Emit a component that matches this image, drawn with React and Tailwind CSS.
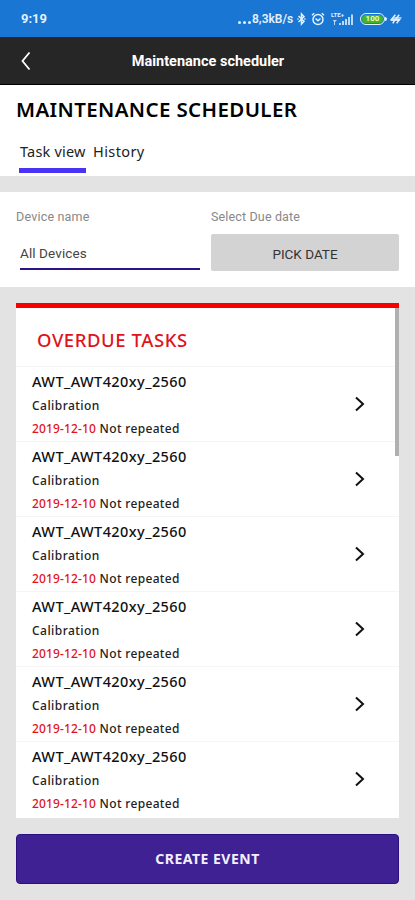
import React from "react";

const tasks = Array.from({ length: 6 }).map((_, i) => ({
  id: i,
  device: "AWT_AWT420xy_2560",
  type: "Calibration",
  due: "2019-12-10",
  repeat: "Not repeated",
}));

const StatusBar = () => (
  <div className="flex h-[37px] shrink-0 items-center bg-[#1976d2] pl-[21px] pr-[13px] pt-px font-[Roboto] text-[#e3f1ff]">
    <span className="text-[13px] font-bold">9:19</span>
    <div className="ml-auto flex items-center">
      <span className="mr-px flex gap-[2px] pt-[6px]">
        <i className="size-[3px] rounded-full bg-current" />
        <i className="size-[3px] rounded-full bg-current" />
        <i className="size-[3px] rounded-full bg-current" />
      </span>
      <span className="w-[44px] whitespace-nowrap text-[12px] font-semibold">8,3kB/s</span>
      {/* bluetooth */}
      <svg className="ml-px" width="9" height="14" viewBox="0 0 9 14" fill="none" stroke="currentColor" strokeWidth="1.5">
        <path d="M1.5 4 7 9.3 4.5 12V2L7 4.7 1.5 10" />
        <path d="M.3 7h1.2M7.2 7h1.3" />
      </svg>
      {/* alarm */}
      <svg className="ml-[5px]" width="14" height="14" viewBox="0 0 14 14" fill="none" stroke="currentColor" strokeWidth="1.5">
        <circle cx="7" cy="7.5" r="5" />
        <path d="M4.5 6.5 7 8.8l2.5-2.3M1 3.2 3.2 1.2M13 3.2 10.8 1.2" />
      </svg>
      {/* signal */}
      <span className="relative ml-[6px] h-[14px] w-[24px]">
        <span className="absolute left-0 top-0 text-[6px] font-bold leading-[6px]">LTE+</span>
        <svg className="absolute inset-0" width="24" height="14" viewBox="0 0 24 14" fill="currentColor">
          <path d="M2 8h4L4 10v3H3v-3zM8 11h2v2H8zM11 9h2v4h-2zM14 7h2v6h-2zM17 5h2v8h-2zM20 2.5h2V13h-2z" opacity=".8" />
        </svg>
      </span>
      {/* battery */}
      <span className="ml-[5px] flex h-[12px] w-[25px] items-center rounded-full border border-current p-px">
        <span className="flex h-full flex-1 items-center justify-center rounded-full bg-[#43b52c] text-[8px] font-bold leading-none text-[#e9ffc9]">
          100
        </span>
      </span>
      <i className="h-[4px] w-[2px] rounded-r bg-current" />
      {/* charging */}
      <svg className="ml-[3px]" width="12" height="12" viewBox="0 0 12 12" fill="none" stroke="currentColor" strokeWidth="1.5">
        <path d="M5.4 1.8 1.6 6.2h3.6L2.8 10.4M9.2 1.8 5.6 6.2h4.2L6.6 10.4" />
        <path d="M.5 7.4h9M3 4.8h8.5" strokeWidth="1" />
      </svg>
    </div>
  </div>
);

const NavBar = () => (
  <div className="relative flex h-[48px] shrink-0 items-center justify-center border-b border-black bg-[#262626] font-[Roboto] text-white">
    <svg className="absolute left-[20px] top-[14px]" width="12" height="20" viewBox="0 0 12 20" fill="none" stroke="currentColor" strokeWidth="1.8">
      <path d="M9.5 1.5 2.5 10l7 8.5" />
    </svg>
    <h1 className="pl-px pt-[3px] text-[14.5px] font-bold">Maintenance scheduler</h1>
  </div>
);

const TaskRow = ({ task }) => (
  <li className="flex h-[75px] items-center justify-between border-t border-[#f5f5f5] pl-4 pr-[34px]">
    <div className="text-[12px] font-medium text-[#222]">
      <p className="mb-[2px] text-[14.5px] leading-[22px] tracking-[0.42px] text-[#111]">{task.device}</p>
      <p className="leading-[24px] tracking-[0.45px]">{task.type}</p>
      <p className="leading-[21px] tracking-[0.33px]">
        <span className="tracking-[0.15px] text-[#e0131c]">{task.due}</span> {task.repeat}
      </p>
    </div>
    <svg width="11" height="16" viewBox="0 0 11 16" fill="none" stroke="#111" strokeWidth="2">
      <path d="M2 1.5 9 8l-7 6.5" />
    </svg>
  </li>
);

export default function App() {
  return (
    <div className="flex h-[900px] w-[415px] flex-col overflow-hidden bg-[#e3e3e3] font-['Noto_Sans',sans-serif]">
      <StatusBar />
      <NavBar />

      {/* page title + tabs */}
      <div className="h-[91px] shrink-0 bg-white px-4 pt-[9px]">
        <h2 className="whitespace-nowrap text-[20.5px] font-semibold leading-[30px] tracking-[0.38px] text-black">
          MAINTENANCE SCHEDULER
        </h2>
        <div className="mt-[14px] flex gap-[7px] pl-[3px] text-[14.5px] text-[#222]">
          <button className="flex h-[35px] w-[67px] whitespace-nowrap border-b-[5px] border-[#4a33f5] pl-px leading-[26px] tracking-[0.2px]">
            Task view
          </button>
          <button className="flex h-[35px] leading-[26px] tracking-[0.4px]">History</button>
        </div>
      </div>

      {/* filters */}
      <div className="mt-4 flex h-[95px] shrink-0 gap-[11px] bg-white px-4 pt-[16px] font-[Roboto]">
        <div className="w-[184px]">
          <label className="block text-[12.5px] leading-[18px] tracking-[0.2px] text-[#888]">Device name</label>
          <div className="ml-1 mt-[16px] h-[28px] border-b-2 border-[#2b1488] text-[13.5px] leading-[23px] tracking-[0.1px] text-[#444]">
            All Devices
          </div>
        </div>
        <div className="w-[188px]">
          <label className="block text-[12.5px] leading-[18px] tracking-[0.15px] text-[#888]">Select Due date</label>
          <button className="mt-[8px] h-[37px] w-full rounded-[2px] bg-[#d3d3d3] pt-[3px] text-[13.5px] text-[#333]">PICK DATE</button>
        </div>
      </div>

      {/* overdue list */}
      <div className="relative mx-4 mt-4 h-[515px] shrink-0 overflow-hidden border-t-[5px] border-[#f60000] bg-white">
        <h3 className="h-[58px] pl-[21px] pt-[18px] text-[18.5px] font-medium leading-[28px] tracking-[0.57px] text-[#e0131c]">
          OVERDUE TASKS
        </h3>
        <ul>
          {tasks.map((task) => (
            <TaskRow key={task.id} task={task} />
          ))}
        </ul>
        <div className="absolute right-0 top-0 h-[148px] w-[4px] bg-[#b0b0b0]" />
      </div>

      <button className="mx-4 mt-4 h-[50px] shrink-0 rounded-[4px] border border-[#2a1080] bg-[#3f2194] pb-[2px] text-[14px] font-bold tracking-[0.5px] text-[#f3efff]">
        CREATE EVENT
      </button>
    </div>
  );
}
